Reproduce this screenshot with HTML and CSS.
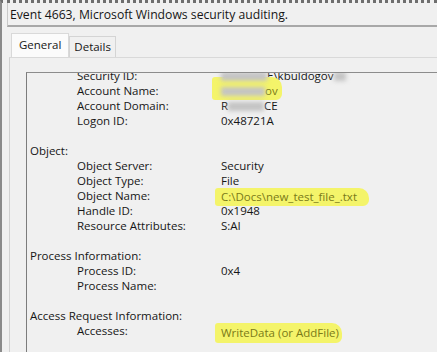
FILE: index.html
```html
<!DOCTYPE html>
<html lang="en">
<head>
    <meta charset="UTF-8">
    <meta name="viewport" content="width=device-width, initial-scale=1.0">
    <title>Event 4663</title>
    <link rel="stylesheet" href="styles.css">
</head>
<body>

<div class="window">
    <!-- Event heading -->
    <div class="event-title">Event 4663, Microsoft Windows security auditing.</div>

    <!-- Tab strip -->
    <div class="tabs">
        <div class="tab active">General</div>
        <div class="tab">Details</div>
    </div>

    <div class="tab-panel">
        <div class="description">
            <div class="scroll">
                <div class="row"><span class="label">Security ID:</span><span class="value"><span class="blur" style="width: 46px"></span>E\kbuldogov<span class="blur" style="width: 12px"></span></span></div>
                <div class="row"><span class="label">Account Name:</span><span class="value"><span class="mark mark-account"><span class="blur" style="width: 44px"></span>ov</span></span></div>
                <div class="row"><span class="label">Account Domain:</span><span class="value">R<span class="blur" style="width: 36px"></span>CE</span></div>
                <div class="row"><span class="label">Logon ID:</span><span class="value">0x48721A</span></div>
                <div class="blank"></div>

                <div class="section">Object:</div>
                <div class="row"><span class="label">Object Server:</span><span class="value">Security</span></div>
                <div class="row"><span class="label">Object Type:</span><span class="value">File</span></div>
                <div class="row"><span class="label">Object Name:</span><span class="value"><span class="mark mark-file">C:\Docs\new_test_file_.txt</span></span></div>
                <div class="row"><span class="label">Handle ID:</span><span class="value">0x1948</span></div>
                <div class="row"><span class="label">Resource Attributes:</span><span class="value">S:AI</span></div>
                <div class="blank"></div>

                <div class="section">Process Information:</div>
                <div class="row"><span class="label">Process ID:</span><span class="value">0x4</span></div>
                <div class="row"><span class="label">Process Name:</span><span class="value"></span></div>
                <div class="blank"></div>

                <div class="section">Access Request Information:</div>
                <div class="row"><span class="label">Accesses:</span><span class="value"><span class="mark mark-access">WriteData (or AddFile)</span></span></div>
            </div>
        </div>
    </div>
</div>

</body>
</html>
```

FILE: styles.css
```css
body {
    margin: 0;
    padding: 0;
    background-color: #f0f0f0;
    font-family: 'Open Sans', 'Noto Sans', sans-serif;
    font-size: 11.5px;
    color: #161616;
    overflow: hidden;
}

.window {
    height: 352px;
    border-top: 3px dotted #6e6e6e;
    border-left: 2px solid #8a8a8a;
    box-sizing: border-box;
    overflow: hidden;
}

/* Heading of the event */
.event-title {
    margin-left: 5px;
    height: 22px;
    line-height: 23px;
    padding-left: 2px;
    border-left: 1px solid #c8c8c8;
    border-bottom: 2px solid #a8a8a8;
    font-size: 12.2px;
    white-space: nowrap;
}

/* Tabs */
.tabs {
    display: flex;
    margin-top: 7px;
    margin-left: 9px;
    height: 23px;
    align-items: flex-end;
}

.tab {
    padding: 0 4px;
    height: 20px;
    line-height: 20px;
    border: 1px solid #d4d4d4;
    border-bottom: none;
    background-color: #f0f0f0;
}

.tab.active {
    height: 23px;
    line-height: 22px;
    padding: 0 7px 0 7px;
    background-color: #fbfbfb;
    border-color: #d9d9d9;
}

.tab-panel {
    margin-left: 7px;
    border-top: 1px solid #d9d9d9;
    border-left: 1px solid #d0d0d0;
    padding: 14px 0 0 16px;
    height: 300px;
}

/* Scrolled text box with the event description */
.description {
    height: 300px;
    border-top: 1px solid #8c8c8c;
    border-left: 1px solid #7c7c7c;
    background-color: #f0f0f0;
    overflow: hidden;
}

.scroll {
    margin-top: -5px;
    padding-left: 3px;
}

.row {
    display: grid;
    grid-template-columns: 144px 1fr;
    padding-left: 47px;
    height: 15px;
    line-height: 15px;
    white-space: nowrap;
}

.section {
    height: 15px;
    line-height: 15px;
}

.blank {
    height: 15px;
}

.blur {
    display: inline-block;
    height: 9px;
    vertical-align: middle;
    background-color: #c4c4c4;
    filter: blur(2px);
}

/* Yellow marker strokes */
.mark {
    display: inline-block;
    background-color: #f4f46a;
    color: #7a7a18;
    border-radius: 3px 10px 6px 3px;
}

.mark-account {
    margin-left: -9px;
    padding: 6px 4px 2px 9px;
    margin-top: -8px;
}

.mark-file {
    margin-left: -6px;
    padding: 1px 12px 2px 6px;
}

.mark-access {
    margin-left: -6px;
    padding: 2px 3px 3px 6px;
}
```
